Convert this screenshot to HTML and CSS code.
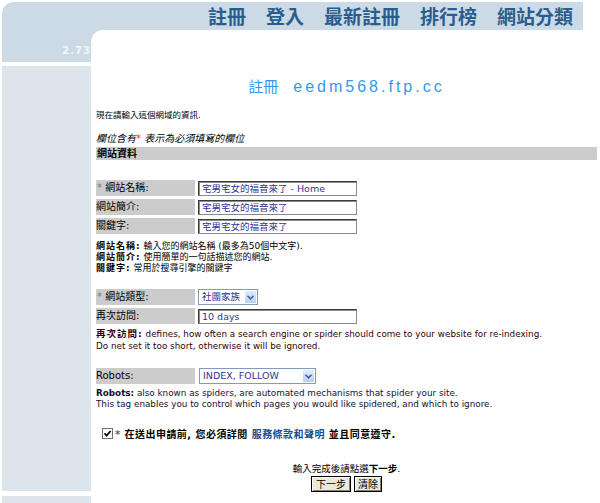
FILE: index.html
```html
<!DOCTYPE html>
<html lang="zh-Hant">
<head>
<meta charset="utf-8">
<title>註冊 eedm568.ftp.cc</title>
<link rel="stylesheet" href="styles.css">
</head>
<body>
<div class="page">
  <header class="topbar">
    <nav class="nav">
      <a href="#">註冊</a>
      <a href="#">登入</a>
      <a href="#">最新註冊</a>
      <a href="#">排行榜</a>
      <a href="#">網站分類</a>
    </nav>
  </header>
  <div class="layout">
    <aside class="side">
      <div class="ver">2.73</div>
      <div class="side-panel"></div>
      <div class="side-panel2"></div>
    </aside>
    <main class="main">
      <h1 class="title"><span class="t-cjk">註冊</span><span class="t-dom">eedm568.ftp.cc</span></h1>
      <p class="intro">現在請輸入這個網域的資訊.</p>
      <p class="note"><i>欄位含有</i><span class="req">*</span><i> 表示為必須填寫的欄位</i></p>
      <div class="bar">網站資料</div>

      <div class="form g1">
        <div class="lbl"><span class="star">*</span> 網站名稱:</div>
        <div class="field"><input class="txt" type="text" value="宅男宅女的福音來了 - Home"></div>
        <div class="lbl">網站簡介:</div>
        <div class="field"><input class="txt" type="text" value="宅男宅女的福音來了"></div>
        <div class="lbl">關鍵字:</div>
        <div class="field"><input class="txt" type="text" value="宅男宅女的福音來了"></div>
      </div>
      <div class="desc d1">
        <div><b>網站名稱:</b> 輸入您的網站名稱 (最多為50個中文字).</div>
        <div><b>網站簡介:</b> 使用簡單的一句話描述您的網站.</div>
        <div><b>關鍵字:</b> 常用於搜尋引擎的關鍵字</div>
      </div>

      <div class="form g2">
        <div class="lbl"><span class="star">*</span> 網站類型:</div>
        <div class="field">
          <div class="select s-type"><span class="sel-text">社團家族</span><span class="arrow"><svg width="9" height="7" viewBox="0 0 9 7"><path d="M1.5 1.8 L4.5 4.8 L7.5 1.8" fill="none" stroke="#4d6185" stroke-width="1.6"/></svg></span></div>
        </div>
        <div class="lbl">再次訪問:</div>
        <div class="field"><input class="txt" type="text" value="10 days"></div>
      </div>
      <div class="desc en d2">
        <div><b class="k">再次訪問:</b> defines, how often a search engine or spider should come to your website for re-indexing.</div>
        <div>Do net set it too short, otherwise it will be ignored.</div>
      </div>

      <div class="form g3">
        <div class="lbl">Robots:</div>
        <div class="field">
          <div class="select s-robots"><span class="sel-text">INDEX, FOLLOW</span><span class="arrow"><svg width="9" height="7" viewBox="0 0 9 7"><path d="M1.5 1.8 L4.5 4.8 L7.5 1.8" fill="none" stroke="#4d6185" stroke-width="1.6"/></svg></span></div>
        </div>
      </div>
      <div class="desc en d3">
        <div><b>Robots:</b> also known as spiders, are automated mechanisms that spider your site.</div>
        <div>This tag enables you to control which pages you would like spidered, and which to ignore.</div>
      </div>

      <div class="agree">
        <svg class="cb" width="11" height="11" viewBox="0 0 11 11"><rect x="0.5" y="0.5" width="10" height="10" fill="#fff" stroke="#707070"/><path d="M2.5 5.2 L4.6 7.6 L8.6 3" fill="none" stroke="#000" stroke-width="1.7"/></svg>
        <span class="agree-text"><span class="star2">*</span> 在送出申請前, 您必須詳閱 <a href="#">服務條款和聲明</a> 並且同意遵守.</span>
      </div>

      <p class="next">輸入完成後請點選<b>下一步</b>.</p>
      <div class="btns">
        <button class="btn b-next" type="button">下一步</button>
        <button class="btn b-clear" type="button">清除</button>
      </div>
    </main>
  </div>
</div>
</body>
</html>
```

FILE: styles.css
```css
html, body {
  margin: 0;
  padding: 0;
  overflow: hidden;
  background: #fff;
}
body {
  font-family: "DejaVu Sans", "Noto Sans CJK TC", sans-serif;
  color: #000;
}
.page {
  padding: 2px 0 0 2px;
  height: 501px;
}
.topbar {
  width: 581px;
  height: 28px;
  background: #ccdae6;
  border-top-left-radius: 12px;
  display: flex;
  justify-content: flex-end;
  align-items: center;
}
.nav {
  display: flex;
  gap: 20px;
  padding-right: 10px;
}
.nav a {
  font-family: "Noto Sans CJK TC", sans-serif;
  font-size: 19px;
  font-weight: 700;
  line-height: 28px;
  color: #2a5d8f;
  text-decoration: none;
}
.layout {
  display: flex;
  background: linear-gradient(#ccdae6, #ccdae6) no-repeat 0 0 / 110px 16px;
}
.side {
  width: 89px;
  flex: none;
}
.ver {
  height: 32px;
  box-sizing: border-box;
  padding: 16px 0 0 0;
  background: #ccdae6;
  text-align: right;
  font: bold 10px/10px "DejaVu Sans", sans-serif;
  letter-spacing: 1px;
  color: #f2f6fa;
}
.side-panel {
  margin-top: 4px;
  height: 425px;
  background: #dce4ec;
}
.side-panel2 {
  margin-top: 5px;
  height: 20px;
  background: #dce4ec;
}
.main {
  flex: 1;
  min-width: 0;
  background: #fff;
  border-top-left-radius: 12px;
  padding: 46px 3px 0 5px;
}
.title {
  margin: 0;
  height: 20px;
  line-height: 20px;
  display: flex;
  justify-content: center;
  align-items: baseline;
  font-weight: normal;
  color: #3399ee;
}
.t-cjk {
  font-family: "Noto Sans CJK TC", sans-serif;
  font-size: 15px;
  margin-right: 15px;
}
.t-dom {
  font-family: "Liberation Sans", sans-serif;
  font-size: 16px;
  letter-spacing: 3px;
}
.intro {
  margin: 13px 0 0;
  font-size: 8.5px;
  line-height: 12px;
}
.note {
  margin: 12px 0 0;
  font-size: 10px;
  line-height: 12px;
}
.req {
  color: #ff3333;
}
.bar {
  margin-top: 2px;
  height: 13px;
  line-height: 13px;
  background: #cccccc;
  font-size: 10px;
  font-weight: bold;
  padding-left: 1px;
}
.form {
  display: grid;
  grid-template-columns: 99px auto;
  column-gap: 3px;
  row-gap: 3px;
  justify-content: start;
}
.g1 { margin-top: 20px; }
.g2 { margin-top: 15px; }
.g3 { margin-top: 16px; }
.lbl {
  height: 16px;
  line-height: 16px;
  background: #cccccc;
  font-size: 10px;
  white-space: nowrap;
}
.star {
  color: #777;
  padding-left: 1px;
}
.field {
  display: flex;
  align-items: center;
}
.txt {
  width: 159px;
  height: 15px;
  box-sizing: border-box;
  margin: 0;
  padding: 0 0 0 3px;
  border: 1px solid #3a3a3a;
  border-right-color: #8a8a8a;
  border-bottom-color: #8a8a8a;
  box-shadow: inset 1px 1px 0 #8a8a8a;
  font-family: "DejaVu Sans", "Noto Sans CJK TC", sans-serif;
  font-size: 9.5px;
  color: #333399;
  background: #fff;
  outline: none;
}
.select {
  display: flex;
  align-items: center;
  height: 16px;
  box-sizing: border-box;
  border: 1px solid #7f9db9;
  background: #fff;
  font-size: 9.5px;
  color: #333399;
  padding-left: 3px;
}
.s-type { width: 60px; }
.s-robots { width: 117px; margin-left: 1px; }
.sel-text {
  white-space: nowrap;
  line-height: 14px;
}
.arrow {
  margin-left: auto;
  width: 13px;
  height: 14px;
  box-sizing: border-box;
  border: 1px solid #fff;
  background: linear-gradient(#e2ebfe, #b9cff9);
  display: flex;
  align-items: center;
  justify-content: center;
}
.desc {
  font-size: 9px;
  line-height: 11px;
}
.desc b {
  letter-spacing: 1px;
}
.d1 { margin-top: 7px; }
.en {
  font-size: 8.8px;
}
.en b.k {
  font-size: 9.5px;
}
.d2 {
  margin-top: 4px;
  line-height: 12px;
  color: #330000;
}
.d3 {
  margin-top: 4px;
  line-height: 10.5px;
  color: #111133;
}
.d3 b { letter-spacing: 0; }
.agree {
  margin-top: 17px;
  padding-left: 6px;
  display: flex;
  align-items: center;
  height: 14px;
}
.cb {
  flex: none;
  margin-right: 2px;
}
.agree-text {
  font-size: 10px;
  font-weight: bold;
  letter-spacing: 0.45px;
  white-space: nowrap;
}
.star2 {
  color: #666;
}
.agree-text a {
  color: #1a4d8c;
  text-decoration: none;
}
.next {
  margin: 23px 0 0;
  text-align: center;
  font-size: 9.5px;
  line-height: 12px;
}
.btns {
  display: flex;
  justify-content: center;
  gap: 3px;
  margin-top: 1px;
}
.btn {
  height: 16px;
  padding: 0;
  margin: 0;
  border: 1px solid #000;
  box-shadow: inset 1px 1px 0 #fff, inset -1px -1px 0 #808080;
  background: #ece9d8;
  font-family: "Noto Sans CJK TC", sans-serif;
  font-size: 10px;
  line-height: 14px;
  color: #000;
}
.b-next { width: 40px; }
.b-clear { width: 28px; }
```
